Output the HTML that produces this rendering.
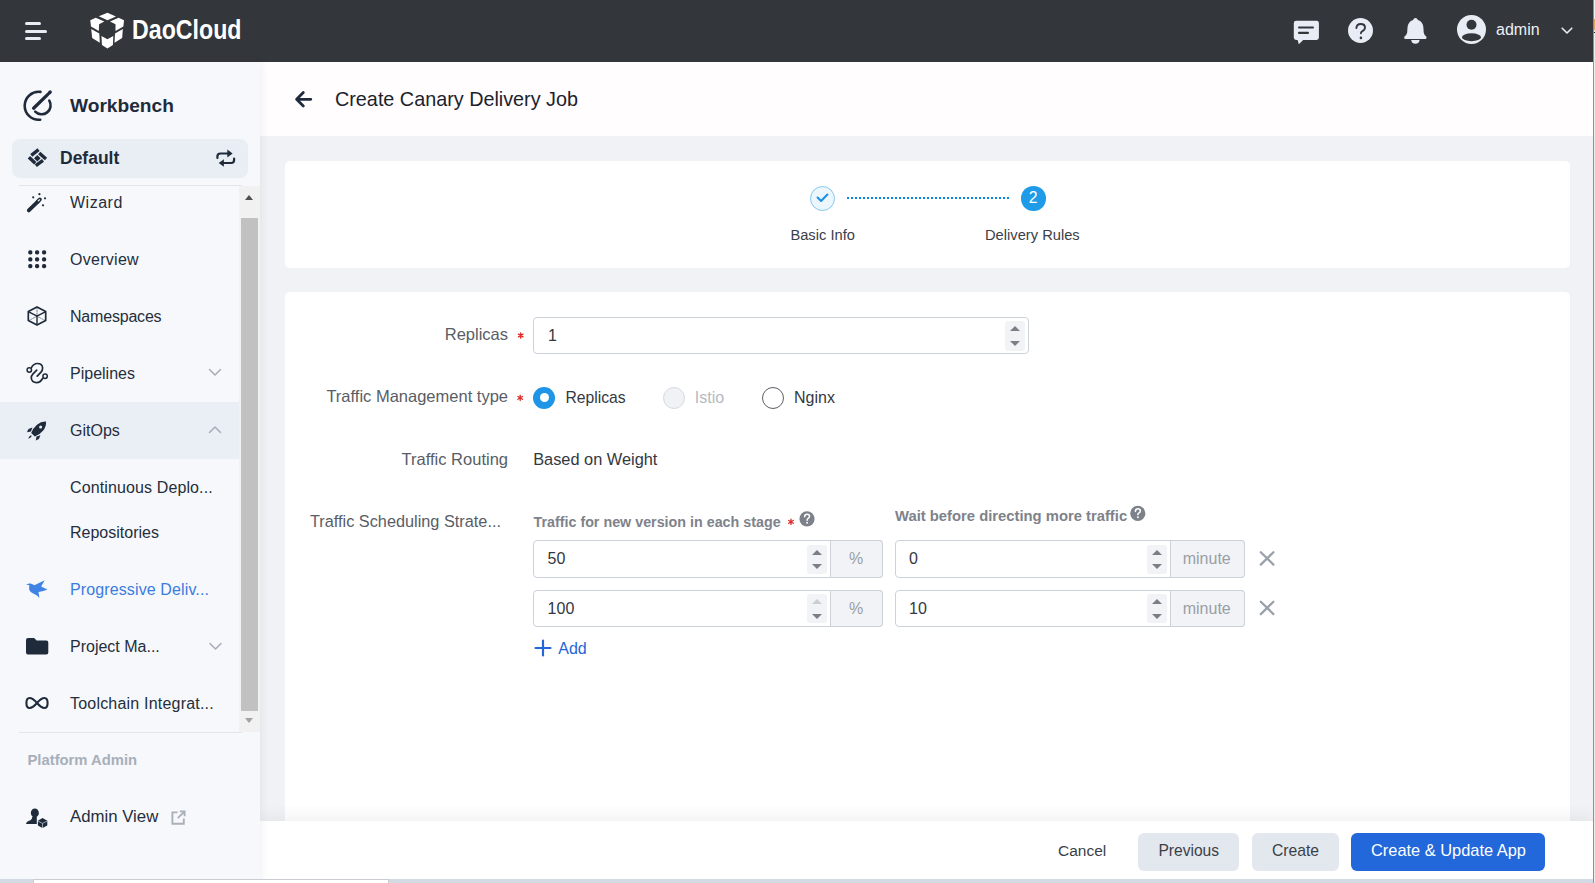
<!DOCTYPE html>
<html><head><meta charset="utf-8">
<style>
*{box-sizing:border-box;margin:0;padding:0}
html,body{width:1595px;height:883px;overflow:hidden;background:#f0f2f5;font-family:"Liberation Sans",sans-serif;color:#252e3c}
.a{position:absolute}
.t{position:absolute;white-space:nowrap;line-height:1}
svg{position:absolute;overflow:visible}
#hdr{left:0;top:0;width:1595px;height:62px;background:#33363b}
#side{z-index:0;left:0;top:62px;width:260px;height:821px;background:#f6f8fb;box-shadow:2px 0 8px rgba(0,0,0,.06)}
.nav{font-size:16px;color:#252e3c}
#ph{left:260px;top:62px;width:1335px;height:74px;background:#fffdfe}
.card{background:#fff;border-radius:5px}
.lbl{font-size:16.5px;color:#595d65}
.inp{background:#fff;border:1px solid #cdd1da;border-radius:4px}
.spin{background:#f1f3f6;border-radius:3px;width:20px}
.tri-up{width:0;height:0;border-left:5px solid transparent;border-right:5px solid transparent;border-bottom:5px solid #7a7e86}
.tri-dn{width:0;height:0;border-left:5px solid transparent;border-right:5px solid transparent;border-top:5px solid #7a7e86}
.addon{background:#f1f3f7;border:1px solid #cdd1da;border-left:none;border-radius:0 4px 4px 0;color:#9a9ea6;font-size:16px;text-align:center}
.val{font-size:16px;color:#34383f}
.btn{border-radius:6px;background:#e3e7ee;color:#3b3f47;font-size:16px}
</style></head><body>

<!-- HEADER -->
<div id="hdr" class="a">
  <div class="a" style="left:25px;top:22px;width:16px;height:3px;background:#e8edf5;border-radius:2px"></div>
  <div class="a" style="left:25px;top:29.5px;width:22px;height:3px;background:#e8edf5;border-radius:2px"></div>
  <div class="a" style="left:25px;top:37px;width:16px;height:3px;background:#e8edf5;border-radius:2px"></div>
  <svg style="left:86px;top:10px" width="42" height="42" viewBox="0 0 883 883">
    <g fill="#fff">
      <polygon points="270,130 450,60 630,135 450,215"/>
      <polygon points="90,215 205,165 385,240 275,300 270,440 105,345"/>
      <polygon points="800,215 685,165 505,240 620,300 620,440 785,345"/>
      <polygon points="110,400 280,495 290,690 130,590"/>
      <polygon points="775,400 610,495 600,690 760,590"/>
      <polygon points="325,545 450,615 575,545 565,735 450,810 335,735"/>
    </g>
  </svg>
  <div class="t" style="left:132px;top:16.3px;font-size:27.6px;font-weight:bold;color:#fff;transform-origin:0 0;transform:scaleX(0.84)">DaoCloud</div>

  <!-- chat -->
  <svg style="left:1293px;top:20px" width="27" height="25" viewBox="0 0 27 25">
    <path d="M3.2 0.7H23.6Q25.9 0.7 25.9 3V17.6Q25.9 20 23.6 20H10.2L5.8 24.3L4.6 20H3.2Q0.8 20 0.8 17.6V3Q0.8 0.7 3.2 0.7Z" fill="#e8edf5"/>
    <rect x="5" y="6.4" width="16" height="2.1" rx="1" fill="#33363b"/>
    <rect x="5" y="11.8" width="11" height="2.1" rx="1" fill="#33363b"/>
  </svg>
  <!-- help -->
  <svg style="left:1348px;top:18px" width="25" height="25" viewBox="0 0 25 25">
    <circle cx="12.5" cy="12.5" r="12.5" fill="#e8edf5"/>
    <path d="M8.4 10Q8.7 6 12.7 6Q17 6 17 9.5Q17 11.6 14.8 12.8Q12.9 13.8 12.9 15.2" fill="none" stroke="#33363b" stroke-width="1.9" stroke-linecap="round"/>
    <circle cx="12.9" cy="19.9" r="1.3" fill="#33363b"/>
  </svg>
  <!-- bell -->
  <svg style="left:1403px;top:17px" width="24" height="27" viewBox="0 0 24 27">
    <path d="M12.5 1Q14.3 1 14.9 2.9Q20 4.5 20.4 10.5L20.7 15.4Q21 17.5 23.3 19.6Q24.2 21.9 22.5 21.9H2.3Q0.6 21.9 1.5 19.6Q3.8 17.5 4.2 15.4L4.5 10.5Q5 4.5 10.1 2.9Q10.7 1 12.5 1Z" fill="#e8edf5"/>
    <path d="M8.2 23.1H16.6Q16.3 26.8 12.4 26.8Q8.5 26.8 8.2 23.1Z" fill="#e8edf5"/>
  </svg>
  <!-- avatar -->
  <svg style="left:1457px;top:15px" width="29" height="29" viewBox="0 0 29 29">
    <circle cx="14.5" cy="14.5" r="14.5" fill="#e8edf5"/>
    <circle cx="14.5" cy="9.7" r="5" fill="#33363b"/>
    <ellipse cx="14.5" cy="22.3" rx="9.5" ry="3.95" fill="#33363b"/>
  </svg>
  <div class="t" style="left:1496px;top:21.5px;font-size:16px;color:#eef1f6">admin</div>
  <svg style="left:1561px;top:27px" width="12" height="7" viewBox="0 0 12 7">
    <path d="M1.2 1.2L6 6L10.8 1.2" fill="none" stroke="#e8edf5" stroke-width="1.6" stroke-linecap="round" stroke-linejoin="round"/>
  </svg>
</div>

<!-- PAGE HEADER -->
<div id="ph" class="a"></div>
<div class="t" style="left:335px;top:89.8px;font-size:19.8px;color:#1c222b">Create Canary Delivery Job</div>

<!-- CARD 1 stepper -->
<div class="a card" style="left:285px;top:161px;width:1285px;height:107px"></div>
<div class="a" style="left:810px;top:186px;width:25px;height:25px;border-radius:50%;border:1px solid #86c8f2;background:#ebf6fd"></div>
<div class="a" style="left:847px;top:197px;width:162px;height:2px;background:repeating-linear-gradient(90deg,#0a86e1 0 2px,transparent 2px 4px)"></div>
<div class="a" style="left:1021px;top:186px;width:24.5px;height:24.5px;border-radius:50%;background:#1f9be8"></div>
<div class="t" style="left:1020.8px;top:190px;width:24.5px;text-align:center;font-size:15.8px;color:#fff">2</div>
<div class="t" style="left:790.4px;top:227.8px;font-size:14.7px;color:#3c4048">Basic Info</div>
<div class="t" style="left:985px;top:227.8px;font-size:14.7px;color:#3c4048">Delivery Rules</div>

<!-- CARD 2 form -->
<div class="a card" style="left:285px;top:292px;width:1285px;height:560px"></div>
<div class="t lbl" style="left:300px;width:208px;text-align:right;top:326.2px">Replicas</div>
<div class="t lbl" style="left:300px;width:208px;text-align:right;top:388.2px">Traffic Management type</div>
<div class="t lbl" style="left:300px;width:208px;text-align:right;top:451.1px">Traffic Routing</div>
<div class="t lbl" style="left:310px;top:513.0px;font-size:16.3px">Traffic Scheduling Strate...</div>

<div class="a inp" style="left:533px;top:317px;width:496px;height:37px"></div>
<div class="t val" style="left:548px;top:328.3px">1</div>
<div class="a spin" style="left:1005px;top:321px;height:29.5px"></div>
<div class="a tri-up" style="left:1010px;top:326px"></div>
<div class="a tri-dn" style="left:1010px;top:341px"></div>

<div class="a" style="left:533px;top:386.5px;width:22px;height:22px;border-radius:50%;background:#1e95e6"></div>
<div class="a" style="left:539.5px;top:393px;width:9px;height:9px;border-radius:50%;background:#fff"></div>
<div class="t val" style="left:565.5px;top:390.4px;font-size:15.7px">Replicas</div>
<div class="a" style="left:663px;top:386.5px;width:22px;height:22px;border-radius:50%;background:#f0f2f5;border:1px solid #d6dae0"></div>
<div class="t val" style="left:694.8px;top:390.2px;color:#b5b9c1">Istio</div>
<div class="a" style="left:762px;top:386.5px;width:22px;height:22px;border-radius:50%;background:#fff;border:1.3px solid #5b5f66"></div>
<div class="t val" style="left:794px;top:390.2px">Nginx</div>

<div class="t val" style="left:533.2px;top:451.3px;font-size:16.35px">Based on Weight</div>

<div class="t" style="left:533.5px;top:515.3px;font-size:14.3px;font-weight:bold;color:#7e828a">Traffic for new version in each stage</div>
<div class="t" style="left:895px;top:508.5px;font-size:14.8px;font-weight:bold;color:#7e828a">Wait before directing more traffic</div>

<!-- row 1 -->
<div class="a inp" style="left:533px;top:540px;width:350px;height:38px"></div>
<div class="a addon" style="left:830px;top:540px;width:53px;height:38px;line-height:36px">%</div>
<div class="a" style="left:830px;top:540px;width:1px;height:38px;background:#cdd1da"></div>
<div class="a spin" style="left:807px;top:544.5px;height:29px"></div>
<div class="a tri-up" style="left:812px;top:549.5px"></div>
<div class="a tri-dn" style="left:812px;top:564px"></div>
<div class="t val" style="left:547.6px;top:551.0px">50</div>

<div class="a inp" style="left:895px;top:540px;width:350px;height:38px"></div>
<div class="a addon" style="left:1169.5px;top:540px;width:75.5px;height:38px;line-height:36px">minute</div>
<div class="a" style="left:1169.5px;top:540px;width:1px;height:38px;background:#cdd1da"></div>
<div class="a spin" style="left:1147px;top:544.5px;height:29px"></div>
<div class="a tri-up" style="left:1152px;top:549.5px"></div>
<div class="a tri-dn" style="left:1152px;top:564px"></div>
<div class="t val" style="left:909px;top:551.0px">0</div>

<!-- row 2 -->
<div class="a inp" style="left:533px;top:590px;width:350px;height:37px"></div>
<div class="a addon" style="left:830px;top:590px;width:53px;height:37px;line-height:35px">%</div>
<div class="a" style="left:830px;top:590px;width:1px;height:37px;background:#cdd1da"></div>
<div class="a spin" style="left:807px;top:594px;height:29px"></div>
<div class="a tri-up" style="left:812px;top:599px;border-bottom-color:#c9cdd4"></div>
<div class="a tri-dn" style="left:812px;top:613.5px"></div>
<div class="t val" style="left:547.6px;top:600.6px">100</div>

<div class="a inp" style="left:895px;top:590px;width:350px;height:37px"></div>
<div class="a addon" style="left:1169.5px;top:590px;width:75.5px;height:37px;line-height:35px">minute</div>
<div class="a" style="left:1169.5px;top:590px;width:1px;height:37px;background:#cdd1da"></div>
<div class="a spin" style="left:1147px;top:594px;height:29px"></div>
<div class="a tri-up" style="left:1152px;top:599px"></div>
<div class="a tri-dn" style="left:1152px;top:613.5px"></div>
<div class="t val" style="left:909px;top:600.6px">10</div>

<div class="t" style="left:558.3px;top:641px;font-size:16px;color:#2266d9">Add</div>

<!-- FOOTER -->
<div class="a" style="left:260px;top:821px;width:1333px;height:58px;background:#fff;box-shadow:0 -6px 14px rgba(0,0,0,.05)"></div>
<div class="t" style="left:1058px;top:843px;font-size:15.5px;color:#3b3f47">Cancel</div>
<div class="a btn" style="left:1138px;top:833px;width:101px;height:38px"></div>
<div class="t" style="left:1158.4px;top:843px;font-size:15.6px;color:#3b3f47">Previous</div>
<div class="a btn" style="left:1252px;top:833px;width:87px;height:38px"></div>
<div class="t" style="left:1272px;top:843px;font-size:15.7px;color:#3b3f47">Create</div>
<div class="a btn" style="left:1351px;top:833px;width:194px;height:38px;background:#2268da"></div>
<div class="t" style="left:1371px;top:842.4px;font-size:16.4px;color:#fff">Create &amp; Update App</div>


<!-- SIDEBAR -->
<div id="side" class="a"></div>
<div class="a" style="left:12px;top:139px;width:236px;height:39px;border-radius:8px;background:#e9eef5"></div>
<div class="a" style="left:19px;top:185px;width:223px;height:1px;background:#e2e6ed"></div>
<div class="a" style="left:0;top:402px;width:239px;height:57px;background:#eaeef5"></div>
<div class="a" style="left:19px;top:732px;width:223px;height:1px;background:#e2e6ed"></div>
<!-- scrollbar -->
<div class="a" style="left:239px;top:186px;width:21px;height:546px;background:#f1f1f1"></div>
<div class="a" style="left:241px;top:218px;width:17px;height:493px;background:#c1c1c1"></div>
<div class="a" style="left:245px;top:195px;width:0;height:0;border-left:4.5px solid transparent;border-right:4.5px solid transparent;border-bottom:5px solid #505050"></div>
<div class="a" style="left:245px;top:718px;width:0;height:0;border-left:4.5px solid transparent;border-right:4.5px solid transparent;border-top:5px solid #a3a3a3"></div>

<div class="t" style="left:70px;top:95.5px;font-size:19.15px;font-weight:bold;color:#1f2b3b">Workbench</div>
<div class="t" style="left:60px;top:150.2px;font-size:17.5px;font-weight:bold;color:#1f2b3b">Default</div>
<div class="t nav" style="left:70px;top:194.7px;letter-spacing:0.5px">Wizard</div>
<div class="t nav" style="left:70px;top:251.7px;letter-spacing:0.28px">Overview</div>
<div class="t nav" style="left:70px;top:308.7px;letter-spacing:-0.2px">Namespaces</div>
<div class="t nav" style="left:70px;top:365.7px">Pipelines</div>
<div class="t nav" style="left:70px;top:422.7px">GitOps</div>
<div class="t nav" style="left:70px;top:480.3px;letter-spacing:0.12px">Continuous Deplo...</div>
<div class="t nav" style="left:70px;top:525.3px">Repositories</div>
<div class="t nav" style="left:70px;top:582.3px;color:#3b7ce0;letter-spacing:0.12px">Progressive Deliv...</div>
<div class="t nav" style="left:70px;top:639.3px">Project Ma...</div>
<div class="t nav" style="left:70px;top:695.8px;letter-spacing:0.2px">Toolchain Integrat...</div>
<div class="t" style="left:27.5px;top:752.5px;font-size:14.8px;font-weight:bold;color:#a8afba">Platform Admin</div>
<div class="t nav" style="left:70px;top:809.4px;font-size:16.8px">Admin View</div>



<!-- ICON OVERLAY (page coordinates) -->
<svg style="left:0;top:0" width="1595" height="883" viewBox="0 0 1595 883">
  <!-- back arrow -->
  <path d="M310.8 99.3H296.8M303.3 92.6L296.6 99.3L303.3 106" fill="none" stroke="#1f2b3b" stroke-width="2.8" stroke-linecap="round" stroke-linejoin="round"/>
  <!-- step 1 check -->
  <path d="M817.6 197.6L821.1 201L827.4 194.6" fill="none" stroke="#1e90e2" stroke-width="2.1" stroke-linecap="round" stroke-linejoin="round"/>
  <!-- asterisks -->
  <g stroke="#e02b2b" stroke-width="1.3" stroke-linecap="round">
    <path d="M520.7 332.8V338.2M518.4 334.1L523 336.9M518.4 336.9L523 334.1"/>
    <path d="M520.2 395.2V400.6M517.9 396.5L522.5 399.3M517.9 399.3L522.5 396.5"/>
    <path d="M791 519.2V524.6M788.7 520.5L793.3 523.3M788.7 523.3L793.3 520.5"/>
  </g>
  <!-- help icons -->
  <g>
    <circle cx="807" cy="518.8" r="7.6" fill="#7d8189"/>
    <path d="M804.6 516.8Q804.7 514.2 807.1 514.2Q809.5 514.2 809.5 516.3Q809.5 517.6 808.2 518.3Q807.1 518.9 807.1 520.2" fill="none" stroke="#fff" stroke-width="1.5" stroke-linecap="round"/>
    <circle cx="807.1" cy="522.7" r="0.95" fill="#fff"/>
    <circle cx="1137.8" cy="513.4" r="7.6" fill="#7d8189"/>
    <path d="M1135.4 511.4Q1135.5 508.8 1137.9 508.8Q1140.3 508.8 1140.3 510.9Q1140.3 512.2 1139 512.9Q1137.9 513.5 1137.9 514.8" fill="none" stroke="#fff" stroke-width="1.5" stroke-linecap="round"/>
    <circle cx="1137.9" cy="517.3" r="0.95" fill="#fff"/>
  </g>
  <!-- X remove -->
  <g stroke="#9aa1ab" stroke-width="2.3" stroke-linecap="round">
    <path d="M1260.8 552.2L1273.4 564.6M1273.4 552.2L1260.8 564.6"/>
    <path d="M1260.8 601.7L1273.4 614.1M1273.4 601.7L1260.8 614.1"/>
  </g>
  <!-- add plus -->
  <path d="M543 640.5V655.5M535.5 648H550.5" stroke="#2266d9" stroke-width="2.2" stroke-linecap="round"/>

  <!-- SIDEBAR ICONS -->
  <g fill="none" stroke="#1f2b3b" stroke-linecap="round" stroke-linejoin="round">
    <!-- workbench -->
    <path d="M40.5 91.9A14 14 0 1 0 40.2 119.7" stroke-width="2.6"/>
    <path d="M49.3 100.6A9 9 0 0 1 35.2 111.6" stroke-width="2.6"/>
    <path d="M33.6 108.2L47.6 94.6" stroke-width="3.3"/>
    <path d="M49.2 93L50.2 92" stroke-width="3.3"/>
    <!-- default pinwheel -->
    <g stroke-width="3.4" stroke-linecap="butt">
      <path d="M31.3 155.3L38.6 149.7"/>
      <path d="M39.2 153L46 159"/>
      <path d="M28.9 157.2L35.3 163.2"/>
      <path d="M35.8 165.7L43 160.4"/>
    </g>
    <!-- swap -->
    <g stroke-width="2.2">
      <path d="M217.4 158V156.5Q217.4 153.5 220.4 153.5H229"/>
      <path d="M234.1 158.5V160Q234.1 163 231.1 163H222.5"/>
    </g>
    <!-- pipelines -->
    <path d="M31.4 367.6Q33.6 363.5 37.3 363.5Q42.4 363.5 42.6 368Q42.7 370.4 40.8 372.4L37.2 376.2" stroke-width="1.7"/>
    <path d="M36.7 370.2L32.8 374.1Q31.2 375.9 31.3 378Q31.7 382.5 36.6 382.6Q40.3 382.6 42.6 378.5" stroke-width="1.7"/>
    <circle cx="29.3" cy="370" r="2.2" stroke-width="1.5"/>
    <circle cx="45.1" cy="376.3" r="2.2" stroke-width="1.5"/>
    <!-- namespaces hexagon -->
    <path d="M37 306.9L45.7 311.6V320.6L37 325L28.3 320.6V311.6Z" stroke-width="1.7"/>
    <path d="M28.8 311.8L37 316.2L45.2 311.8M37 316.2V324.6" stroke-width="1.4"/>
    <path d="M37 307.5V316.2M37 316.2L29.5 320.2M37 316.2L44.5 320.2" stroke-width="0.9" stroke-dasharray="1.6 1.2" opacity="0.6"/>
    <!-- infinity -->
    <path d="M37 703C34 699.5 31.5 698 29.6 698C27.6 698 26.4 700.2 26.4 703C26.4 705.8 27.6 708 29.6 708C31.5 708 34 706.5 37 703C40 699.5 42.5 698 44.4 698C46.4 698 47.6 700.2 47.6 703C47.6 705.8 46.4 708 44.4 708C42.5 708 40 706.5 37 703Z" stroke-width="2.1"/>
    <!-- chevrons -->
    <g stroke="#a6adb8" stroke-width="1.5">
      <path d="M209.5 369.5L215 375L220.5 369.5"/>
      <path d="M209.5 432.5L215 427L220.5 432.5"/>
      <path d="M210 643.5L215.5 649L221 643.5"/>
    </g>
    <!-- external link -->
    <g stroke="#a9b0ba" stroke-width="1.9" stroke-linecap="butt" stroke-linejoin="miter">
      <path d="M177.5 812.4H172.4V823.8H183.8V818.6"/>
      <path d="M177.8 818.2L184.6 811.4M179.8 811.4H184.6V816.2"/>
    </g>
  </g>
  <g fill="#1f2b3b">
    <!-- swap arrowheads -->
    <path d="M227.3 149.6L232.6 153.5L227.3 157.4Z"/>
    <path d="M223.9 159.2L218.7 163L223.9 166.8Z"/>
    <!-- pinwheel center -->
    <path d="M37.3 154.9L40.7 158.3L37.3 161.6L34 158.3Z"/>
    <!-- wizard wand -->
    <path d="M28.8 210.4L37.8 201.6" stroke="#1f2b3b" stroke-width="3.8" stroke-linecap="round"/>
    <path d="M37.8 201.6L39.9 199.4" stroke="#1f2b3b" stroke-width="3.8" stroke-linecap="round"/>
    <path d="M38.3 200.9L39.5 199.8" stroke="#f6f8fb" stroke-width="1.2" stroke-linecap="round"/>
    <circle cx="33.2" cy="197.3" r="1.1"/>
    <circle cx="39.4" cy="194.2" r="1.1"/>
    <circle cx="45" cy="198.3" r="1.1"/>
    <circle cx="43" cy="205.3" r="1.1"/>
    <!-- overview grid -->
    <rect x="28.2" y="250.2" width="4.2" height="4.2" rx="1.7"/>
    <rect x="35" y="250.2" width="4.2" height="4.2" rx="1.7"/>
    <rect x="42" y="250.2" width="4.2" height="4.2" rx="1.7"/>
    <rect x="28.2" y="257.2" width="4.2" height="4.2" rx="1.7"/>
    <rect x="35" y="257.2" width="4.2" height="4.2" rx="1.7"/>
    <rect x="42" y="257.2" width="4.2" height="4.2" rx="1.7"/>
    <rect x="28.2" y="264" width="4.2" height="4.2" rx="1.7"/>
    <rect x="35" y="264" width="4.2" height="4.2" rx="1.7"/>
    <rect x="42" y="264" width="4.2" height="4.2" rx="1.7"/>
    <!-- rocket -->
    <path d="M46 421.5Q46.5 426.5 43 430.8Q39.5 435 34.8 436.6L31.2 433.1Q32.8 428.4 37 424.8Q41.3 421.1 46 421.5Z"/>
    <path d="M32.4 427.6L28.5 429.1L26.9 432.3L31 431.5Z"/>
    <path d="M40.4 435.2L38.9 439.1L35.8 440.6L36.5 436.6Z"/>
    <path d="M30.9 435.2Q28.6 436.3 28.3 438.7Q30.6 438.4 31.8 436.1Z"/>
    <!-- folder -->
    <path d="M26 640Q26 638 28 638H34.2L36.6 640.6H46.3Q48.3 640.6 48.3 642.6V652.5Q48.3 654.5 46.3 654.5H28Q26 654.5 26 652.5Z"/>
    <!-- admin person -->
    <ellipse cx="34.85" cy="812.9" rx="4" ry="4.3"/>
    <path d="M26 823.9Q26.5 821.4 30 820.5Q32.2 819.8 32.4 816.5L36.8 816.5V823.9Z"/>
    <path d="M42.5 817.9L47.3 820.8V825.5L42.5 828.1L37.9 825.5V820.8Z"/>
  </g>
  <circle cx="40.6" cy="426.9" r="1.5" fill="#eaeef5"/>
  <path d="M37.9 821L42.5 823.4L47.3 821M42.5 823.4V828" fill="none" stroke="#b9c3cf" stroke-width="0.8"/>
  <!-- bird -->
  <path d="M26.1 584.4Q28.5 583.3 30.5 583.5Q32.5 583.9 34.4 585.3L44.7 580.2L41.1 586.6L47.4 589.4Q44 591.2 38.5 592L39.4 598Q37.5 595.2 34.7 594.3Q30.3 592.6 29.4 590.1Q28.9 587.3 29.3 585.2Z" fill="#3f84e5"/>
</svg>

<div class="a" style="left:0;top:879px;width:1595px;height:4px;background:#d3dae3"></div>
<div class="a" style="left:33px;top:879px;width:356px;height:4px;background:#fff;border:1px solid #c9ccd1;border-bottom:none"></div>
<div class="a" style="left:1593px;top:0;width:2px;height:883px;background:#eeeeee;border-left:1px solid #8d9095"></div>
<div class="a" style="left:1594px;top:19px;width:1px;height:11px;background:#dba460"></div>
<div class="a" style="left:1594px;top:32px;width:1px;height:1px;background:#222"></div>
</body></html>
